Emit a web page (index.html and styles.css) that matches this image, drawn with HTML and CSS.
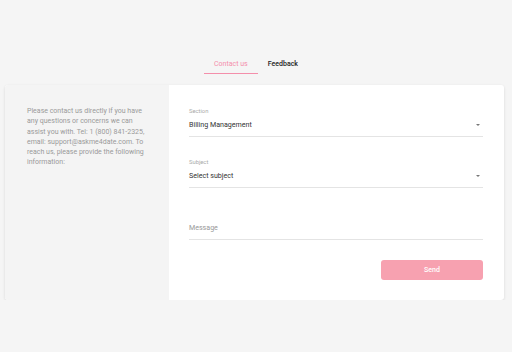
FILE: index.html
```html
<!DOCTYPE html>
<html>
<head>
<meta charset="utf-8">
<link rel="stylesheet" href="styles.css">
</head>
<body>
<div class="tabs">
  <div class="tab active">Contact us</div>
  <div class="tab">Feedback</div>
</div>
<div class="card">
  <div class="info">
    <p>Please contact us directly if you have any questions or concerns we can assist you with. Tel: 1 (800) 841-2325, email: support@askme4date.com. To reach us, please provide the following information:</p>
  </div>
  <div class="form">
    <div class="field">
      <div class="label">Section</div>
      <div class="value select">Billing Management<span class="arrow"></span></div>
    </div>
    <div class="field">
      <div class="label">Subject</div>
      <div class="value select">Select subject<span class="arrow"></span></div>
    </div>
    <div class="field">
      <div class="label"></div>
      <div class="value placeholder">Message</div>
    </div>
    <div class="actions">
      <button class="send">Send</button>
    </div>
  </div>
</div>
</body>
</html>
```
FILE: styles.css
```css
html, body {
  margin: 0;
  padding: 0;
  background: #f5f5f5;
  font-family: Roboto, "Liberation Sans", sans-serif;
}
.tabs {
  display: flex;
  justify-content: center;
  padding-top: 55px;
}
.tab {
  font-size: 7px;
  line-height: 18px;
  padding: 0 10px;
  color: #222;
  font-weight: 500;
  border-bottom: 1px solid transparent;
}
.tab.active {
  color: #f48fab;
  font-weight: 400;
  border-bottom: 1px solid #f48fab;
}
.card {
  margin: 11px 0 0 5px;
  width: 499px;
  height: 215px;
  display: flex;
  background: #fff;
  border-radius: 3px;
  box-shadow: 0 1px 3px rgba(0,0,0,0.12);
  overflow: hidden;
}
.info {
  width: 164px;
  flex: none;
  background: #f4f4f4;
  box-sizing: border-box;
  padding: 21px 19px 0 22px;
}
.info p {
  margin: 0;
  font-size: 7px;
  line-height: 10.3px;
  color: #9a9a9a;
}
.form {
  flex: 1;
  padding: 22px 21px 0 20px;
  display: flex;
  flex-direction: column;
}
.field {
  border-bottom: 1px solid #e4e4e4;
  padding-bottom: 5px;
  margin-bottom: 21px;
}
.label {
  font-size: 5.8px;
  line-height: 8px;
  height: 8px;
  color: #aaa;
}
.value {
  margin-top: 4px;
  font-size: 7.1px;
  line-height: 12px;
  color: #333;
  position: relative;
}
.value.placeholder {
  color: #999;
  margin-top: 5px;
}
.arrow {
  position: absolute;
  right: 3px;
  top: 5px;
  width: 0;
  height: 0;
  border-left: 2.5px solid transparent;
  border-right: 2.5px solid transparent;
  border-top: 2.5px solid #777;
}
.actions {
  display: flex;
  justify-content: flex-end;
  margin-top: -1px;
}
.send {
  width: 102px;
  height: 20px;
  border: none;
  border-radius: 3px;
  background: #f7a1b0;
  color: #fff;
  font-family: Roboto, "Liberation Sans", sans-serif;
  font-size: 7px;
  font-weight: 500;
  padding: 0;
}
```
